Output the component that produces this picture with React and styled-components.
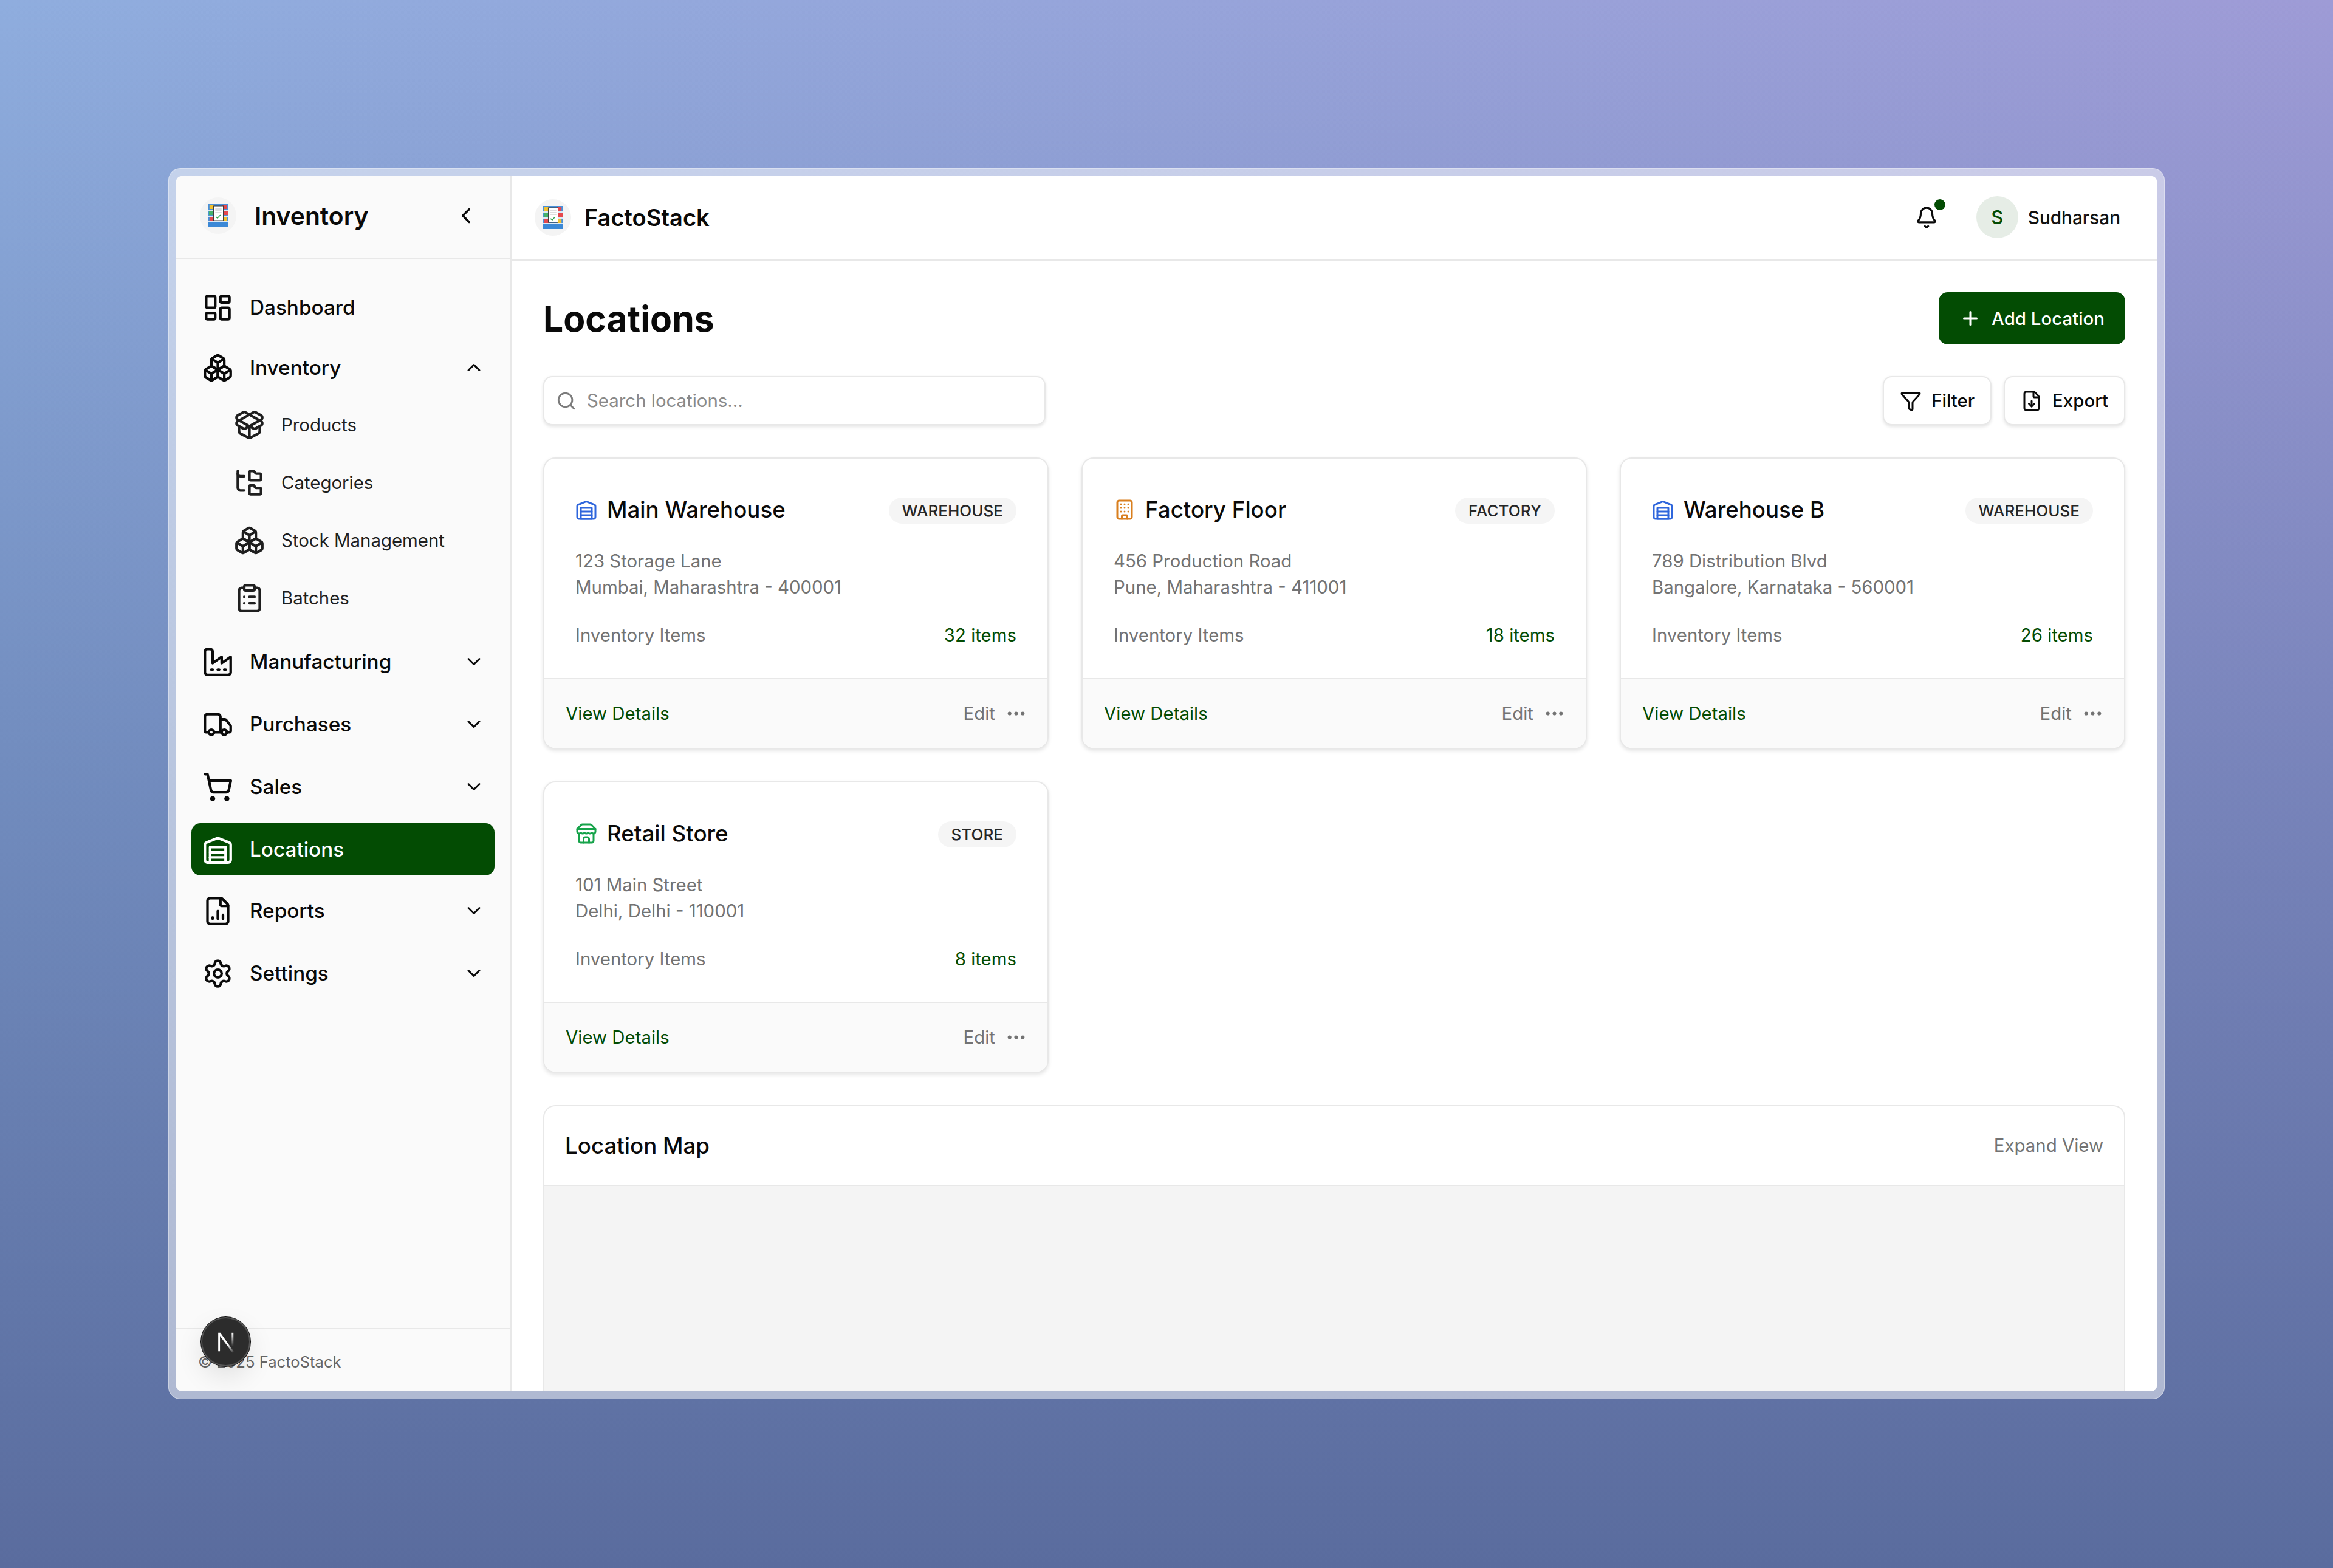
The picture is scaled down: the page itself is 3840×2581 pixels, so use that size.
import React from 'react'
import styled, { createGlobalStyle } from 'styled-components'
import {
  Bell, Boxes, Building, ChevronDown, ChevronLeft, ChevronUp, ClipboardList, Ellipsis,
  FileChartColumn, FileDown, Filter, FolderTree, LayoutDashboard, PackageOpen, Plus, Search,
  Settings, ShoppingCart, Truck,
} from 'lucide-react'

const green = '#034c03'
const line = '#e8e8e8'

const Global = createGlobalStyle`
  html, body { margin: 0; padding: 0; }
  body { font-family: Inter, "Liberation Sans", sans-serif; color: #0a0a0a; }
  * { box-sizing: border-box; }
`

const Page = styled.div`
  width: 3840px;
  height: 2581px;
  padding: 277px 277px 0;
  overflow: hidden;
  background:
    linear-gradient(to bottom, rgba(88, 114, 165, 0) 0%, rgba(88, 112, 163, 0.55) 50%, rgba(90, 108, 158, 1) 100%),
    linear-gradient(to right, #8fadde, #9e9bd6);
`

const Frame = styled.div`
  width: 3286px;
  height: 2026px;
  padding: 13px;
  border-radius: 20px;
  background: rgba(255, 255, 255, 0.5);
  box-shadow: inset 0 0 0 1px rgba(255, 255, 255, 0.35);
`

const Panel = styled.div`
  position: relative;
  display: flex;
  width: 100%;
  height: 100%;
  border-radius: 9px;
  background: #fff;
  overflow: hidden;
`

const Sidebar = styled.aside`
  display: flex;
  flex-direction: column;
  width: 552px;
  flex-shrink: 0;
  background: #fafafa;
  border-right: 2.5px solid ${line};
`

const SideHead = styled.div`
  display: flex;
  align-items: center;
  height: 137px;
  padding: 0 52px 6px 39px;
  border-bottom: 2.5px solid ${line};
`

const LogoWrap = styled.div`
  display: flex;
  align-items: center;
  justify-content: center;
  width: 60px;
  height: 60px;
  flex-shrink: 0;
  border-radius: 50%;
  background: #f4f4f4;
`

const SideTitle = styled.div`
  flex: 1;
  margin-left: 30px;
  font-size: 40.8px;
  font-weight: 600;
  color: #0a0a0a;
`

const Nav = styled.nav`
  display: flex;
  flex: 1;
  flex-direction: column;
  gap: 13px;
  padding: 36px 26px 0 25px;
`

const Row = styled.div`
  display: flex;
  align-items: center;
  gap: 27px;
  height: ${p => (p.$link ? 86 : 90)}px;
  margin-top: ${p => (p.$active ? 2 : 0)}px;
  padding: 0 16px 0 18px;
  border-radius: 15px;
  font-size: 33.3px;
  font-weight: 500;
  color: ${p => (p.$active ? '#fff' : '#0a0a0a')};
  background: ${p => (p.$active ? green : 'transparent')};
  span { flex: 1; }
  svg { flex-shrink: 0; }
`

const SubList = styled.div`
  display: flex;
  flex-direction: column;
  gap: 13px;
  margin: -3px 0 6px;
`

const SubRow = styled.div`
  display: flex;
  align-items: center;
  gap: 27px;
  height: 82px;
  padding-left: 70px;
  font-size: 29.4px;
  font-weight: 400;
  color: #1f1f1f;
`

const SideFoot = styled.div`
  height: 104px;
  padding: 38px 36px 0;
  border-top: 2.5px solid ${line};
  font-size: 25.6px;
  color: #666;
`

const DevBadge = styled.div`
  position: absolute;
  left: 41px;
  top: 1878px;
  display: flex;
  align-items: center;
  justify-content: center;
  width: 81px;
  height: 81px;
  border-radius: 50%;
  background: #2c2c2c;
  border: 2px solid #555;
  box-shadow: 0 0 0 1px #111, 0 18px 44px rgba(0, 0, 0, 0.1);
`

const Main = styled.main`
  display: flex;
  flex: 1;
  flex-direction: column;
  min-width: 0;
  background: #fff;
`

const TopBar = styled.header`
  display: flex;
  align-items: center;
  height: 139px;
  padding: 0 60px 2px 38px;
  border-bottom: 2.5px solid ${line};
`

const Brand = styled.div`
  flex: 1;
  margin-left: 22px;
  font-size: 38px;
  font-weight: 600;
`

const BellWrap = styled.div`
  position: relative;
  display: flex;
  margin-right: 63px;
`

const BellDot = styled.i`
  position: absolute;
  top: -11px;
  right: -12px;
  width: 18px;
  height: 18px;
  border-radius: 50%;
  background: ${green};
`

const Avatar = styled.div`
  display: flex;
  align-items: center;
  justify-content: center;
  width: 69px;
  height: 69px;
  margin-right: 16px;
  border-radius: 50%;
  background: #e6ede6;
  font-size: 31px;
  font-weight: 500;
  color: ${green};
`

const UserName = styled.div`
  font-size: 29.7px;
  font-weight: 500;
  color: #111;
`

const Content = styled.div`
  display: flex;
  flex: 1;
  flex-direction: column;
  padding: 52px 52px 0;
  min-height: 0;
`

const TitleRow = styled.div`
  display: flex;
  align-items: center;
  justify-content: space-between;
  height: 86px;
`

const PageTitle = styled.h1`
  margin: 0;
  font-size: 58.8px;
  font-weight: 700;
  color: #0a0a0a;
`

const AddButton = styled.button`
  display: flex;
  align-items: center;
  gap: 17px;
  height: 86px;
  padding: 0 34px;
  border: 0;
  border-radius: 15px;
  background: ${green};
  color: #fff;
  font-family: inherit;
  font-size: 29.4px;
  font-weight: 500;
`

const Toolbar = styled.div`
  display: flex;
  align-items: stretch;
  justify-content: space-between;
  height: 81px;
  margin-top: 52px;
`

const SearchBox = styled.label`
  display: flex;
  align-items: center;
  gap: 15px;
  width: 827px;
  padding-left: 19px;
  background: #fff;
  border: 2.5px solid ${line};
  border-radius: 15px;
  box-shadow: 0 2.5px 5px rgba(0, 0, 0, 0.1);
  color: #7c7c7c;
`

const SearchInput = styled.input`
  flex: 1;
  border: 0;
  outline: 0;
  background: none;
  font-family: inherit;
  font-size: 29.4px;
  &::placeholder { color: #8a8a8a; opacity: 1; }
`

const ToolActions = styled.div`
  display: flex;
  gap: 20px;
`

const ToolButton = styled.button`
  display: flex;
  align-items: center;
  gap: 16px;
  padding: 0 26px;
  background: #fff;
  border: 2.5px solid ${line};
  border-radius: 15px;
  box-shadow: 0 2.5px 5px rgba(0, 0, 0, 0.1);
  font-family: inherit;
  font-size: 29.4px;
  font-weight: 500;
  color: #0a0a0a;
`

const Grid = styled.div`
  display: grid;
  grid-template-columns: repeat(3, 1fr);
  gap: 53px 54px;
  margin-top: 53px;
`

const Card = styled.article`
  display: flex;
  flex-direction: column;
  height: 480px;
  background: #fff;
  border: 2.5px solid ${line};
  border-radius: 20px;
  box-shadow: 0 3px 6px rgba(0, 0, 0, 0.11);
  overflow: hidden;
`

const CardBody = styled.div`
  flex: 1;
  padding: 62px 51px 0 51px;
`

const CardHead = styled.div`
  display: flex;
  align-items: center;
  height: 43px;
`

const CardTitle = styled.h3`
  flex: 1;
  margin: 0 0 0 16px;
  font-size: 36.7px;
  font-weight: 500;
  color: #0a0a0a;
`

const Badge = styled.div`
  display: flex;
  align-items: center;
  height: 43px;
  margin-top: 3px;
  padding: 0 22px;
  border-radius: 22px;
  background: #f5f5f5;
  font-size: 26px;
  font-weight: 500;
  color: #262626;
`

const Address = styled.div`
  margin-top: 43px;
  font-size: 29.4px;
  line-height: 42.8px;
  color: #737373;
`

const StatRow = styled.div`
  display: flex;
  justify-content: space-between;
  margin-top: 36px;
  font-size: 29.4px;
  line-height: 42.8px;
  color: #737373;
`

const StatValue = styled.span`
  font-weight: 400;
  color: ${green};
`

const CardFoot = styled.div`
  display: flex;
  align-items: center;
  height: 115px;
  padding: 0 33px 0 35px;
  background: #fafafa;
  border-top: 2.5px solid ${line};
  font-size: 29.4px;
`

const DetailsLink = styled.a`
  flex: 1;
  font-weight: 400;
  color: ${green};
`

const EditLink = styled.a`
  margin-right: 16px;
  color: #737373;
`

const MapCard = styled.section`
  flex: 1;
  margin-top: 53px;
  background: #fff;
  border: 2.5px solid ${line};
  border-bottom: 0;
  border-radius: 20px 20px 0 0;
  overflow: hidden;
`

const MapHead = styled.div`
  display: flex;
  align-items: center;
  justify-content: space-between;
  height: 131px;
  padding: 0 34px;
  border-bottom: 2.5px solid ${line};
`

const MapTitle = styled.h2`
  margin: 0;
  font-size: 36.7px;
  font-weight: 500;
  color: #0a0a0a;
`

const MapLink = styled.a`
  font-size: 29.4px;
  color: #737373;
`

const MapBody = styled.div`
  height: 100%;
  background: #f4f4f4;
`

const Logo = () => (
  <svg width="34" height="38" viewBox="0 0 36 38" preserveAspectRatio="none">
    <rect width="36" height="38" fill="#4a90d9" />
    <rect y="30" width="36" height="8" fill="#3b88d6" />
    <rect y="28" width="36" height="2" fill="#dbe9f6" />
    <rect y="9" width="36" height="2" fill="#dbe9f6" />
    <rect y="19" width="36" height="2" fill="#dbe9f6" />
    <rect x="3" y="1" width="8" height="7" fill="#f2c12e" />
    <rect x="25" y="1" width="8" height="7" fill="#e5484d" />
    <rect x="2" y="12" width="8" height="6" fill="#46b36a" />
    <rect x="27" y="12" width="9" height="6" fill="#e5484d" />
    <rect x="3" y="22" width="8" height="6" fill="#e5484d" />
    <rect x="26" y="22" width="7" height="6" fill="#f2c12e" />
    <rect x="10" y="3" width="17" height="24" fill="#fff" stroke="#333" strokeWidth="1" />
    <path d="M13 8h11M13 11h11M13 14h11" stroke="#bbb" strokeWidth="1" />
    <path d="M14 21l3 2 5-5" stroke="#2ea44f" strokeWidth="1.6" fill="none" />
  </svg>
)

const NextMark = () => (
  <svg width="42" height="42" viewBox="0 0 36 36">
    <defs>
      <linearGradient id="nextFade" x1="0" y1="0" x2="1" y2="1">
        <stop offset="60%" stopColor="#fff" />
        <stop offset="100%" stopColor="#fff" stopOpacity="0" />
      </linearGradient>
      <linearGradient id="nextBar" x1="0" y1="0" x2="0" y2="1">
        <stop offset="0%" stopColor="#fff" />
        <stop offset="80%" stopColor="#fff" stopOpacity="0" />
      </linearGradient>
    </defs>
    <path d="M7 5v26h2.5V9.5L27 33l2-1.5L10 5z" fill="url(#nextFade)" />
    <rect x="26" y="5" width="2.5" height="24" fill="url(#nextBar)" />
  </svg>
)

const Stroke = ({ size, color = 'currentColor', children }) => (
  <svg width={size} height={size} viewBox="0 0 24 24" fill="none" stroke={color} strokeWidth="2" strokeLinecap="round" strokeLinejoin="round">
    {children}
  </svg>
)

const WarehouseIcon = ({ size, color }) => (
  <Stroke size={size} color={color}>
    <path d="M22 8.35V20a2 2 0 0 1-2 2H4a2 2 0 0 1-2-2V8.35A2 2 0 0 1 3.26 6.5l8-3.2a2 2 0 0 1 1.48 0l8 3.2A2 2 0 0 1 22 8.35Z" />
    <path d="M6 18h12" />
    <path d="M6 14h12" />
    <rect x="6" y="10" width="12" height="12" />
  </Stroke>
)

const FactoryIcon = ({ size, color }) => (
  <Stroke size={size} color={color}>
    <path d="M2 20a2 2 0 0 0 2 2h16a2 2 0 0 0 2-2V8l-7 5V8l-7 5V4a2 2 0 0 0-2-2H4a2 2 0 0 0-2 2Z" />
    <path d="M17 18h1" />
    <path d="M12 18h1" />
    <path d="M7 18h1" />
  </Stroke>
)

const StoreIcon = ({ size, color }) => (
  <Stroke size={size} color={color}>
    <path d="m2 7 4.41-4.41A2 2 0 0 1 7.83 2h8.34a2 2 0 0 1 1.42.59L22 7" />
    <path d="M4 12v8a2 2 0 0 0 2 2h12a2 2 0 0 0 2-2v-8" />
    <path d="M15 22v-4a2 2 0 0 0-2-2h-2a2 2 0 0 0-2 2v4" />
    <path d="M2 7h20" />
    <path d="M22 7v3a2 2 0 0 1-2 2a2.7 2.7 0 0 1-1.59-.63.7.7 0 0 0-.82 0A2.7 2.7 0 0 1 16 12a2.7 2.7 0 0 1-1.59-.63.7.7 0 0 0-.82 0A2.7 2.7 0 0 1 12 12a2.7 2.7 0 0 1-1.59-.63.7.7 0 0 0-.82 0A2.7 2.7 0 0 1 8 12a2.7 2.7 0 0 1-1.59-.63.7.7 0 0 0-.82 0A2.7 2.7 0 0 1 4 12a2 2 0 0 1-2-2V7" />
  </Stroke>
)

const navIcon = 51
const chev = { size: 36, strokeWidth: 2 }

const subItems = [
  { label: 'Products', Icon: PackageOpen },
  { label: 'Categories', Icon: FolderTree },
  { label: 'Stock Management', Icon: Boxes },
  { label: 'Batches', Icon: ClipboardList },
]

const locations = [
  { name: 'Main Warehouse', type: 'WAREHOUSE', Icon: WarehouseIcon, color: '#2f66dc', street: '123 Storage Lane', city: 'Mumbai, Maharashtra - 400001', items: 32 },
  { name: 'Factory Floor', type: 'FACTORY', Icon: Building, color: '#d97f1e', street: '456 Production Road', city: 'Pune, Maharashtra - 411001', items: 18 },
  { name: 'Warehouse B', type: 'WAREHOUSE', Icon: WarehouseIcon, color: '#2f66dc', street: '789 Distribution Blvd', city: 'Bangalore, Karnataka - 560001', items: 26 },
  { name: 'Retail Store', type: 'STORE', Icon: StoreIcon, color: '#16a34a', street: '101 Main Street', city: 'Delhi, Delhi - 110001', items: 8 },
]

const NavGroup = ({ label, Icon }) => (
  <Row>
    <Icon size={navIcon} strokeWidth={2} />
    <span>{label}</span>
    <ChevronDown {...chev} />
  </Row>
)

export default function App() {
  return (
    <Page>
      <Global />
      <Frame>
        <Panel>
          <Sidebar>
            <SideHead>
              <LogoWrap><Logo /></LogoWrap>
              <SideTitle>Inventory</SideTitle>
              <ChevronLeft size={42} strokeWidth={2} />
            </SideHead>
            <Nav>
              <Row $link>
                <LayoutDashboard size={navIcon} strokeWidth={2} />
                <span>Dashboard</span>
              </Row>
              <Row $link>
                <Boxes size={navIcon} strokeWidth={2} />
                <span>Inventory</span>
                <ChevronUp {...chev} />
              </Row>
              <SubList>
                {subItems.map(({ label, Icon }) => (
                  <SubRow key={label}>
                    <Icon size={navIcon} strokeWidth={2} />
                    {label}
                  </SubRow>
                ))}
              </SubList>
              <NavGroup label="Manufacturing" Icon={FactoryIcon} />
              <NavGroup label="Purchases" Icon={Truck} />
              <NavGroup label="Sales" Icon={ShoppingCart} />
              <Row $link $active>
                <WarehouseIcon size={navIcon} />
                <span>Locations</span>
              </Row>
              <NavGroup label="Reports" Icon={FileChartColumn} />
              <NavGroup label="Settings" Icon={Settings} />
            </Nav>
            <SideFoot>© 2025 FactoStack</SideFoot>
          </Sidebar>
          <Main>
            <TopBar>
              <LogoWrap><Logo /></LogoWrap>
              <Brand>FactoStack</Brand>
              <BellWrap>
                <Bell size={38} strokeWidth={2} />
                <BellDot />
              </BellWrap>
              <Avatar>S</Avatar>
              <UserName>Sudharsan</UserName>
            </TopBar>
            <Content>
              <TitleRow>
                <PageTitle>Locations</PageTitle>
                <AddButton><Plus size={36} strokeWidth={2} />Add Location</AddButton>
              </TitleRow>
              <Toolbar>
                <SearchBox>
                  <Search size={34} strokeWidth={2} />
                  <SearchInput placeholder="Search locations..." />
                </SearchBox>
                <ToolActions>
                  <ToolButton><Filter size={36} strokeWidth={2} />Filter</ToolButton>
                  <ToolButton><FileDown size={36} strokeWidth={2} />Export</ToolButton>
                </ToolActions>
              </Toolbar>
              <Grid>
                {locations.map(loc => (
                  <Card key={loc.name}>
                    <CardBody>
                      <CardHead>
                        <loc.Icon size={36} color={loc.color} />
                        <CardTitle>{loc.name}</CardTitle>
                        <Badge>{loc.type}</Badge>
                      </CardHead>
                      <Address>{loc.street}<br />{loc.city}</Address>
                      <StatRow>
                        <span>Inventory Items</span>
                        <StatValue>{loc.items} items</StatValue>
                      </StatRow>
                    </CardBody>
                    <CardFoot>
                      <DetailsLink>View Details</DetailsLink>
                      <EditLink>Edit</EditLink>
                      <Ellipsis size={37} strokeWidth={2} color="#737373" />
                    </CardFoot>
                  </Card>
                ))}
              </Grid>
              <MapCard>
                <MapHead>
                  <MapTitle>Location Map</MapTitle>
                  <MapLink>Expand View</MapLink>
                </MapHead>
                <MapBody />
              </MapCard>
            </Content>
          </Main>
          <DevBadge><NextMark /></DevBadge>
        </Panel>
      </Frame>
    </Page>
  )
}
